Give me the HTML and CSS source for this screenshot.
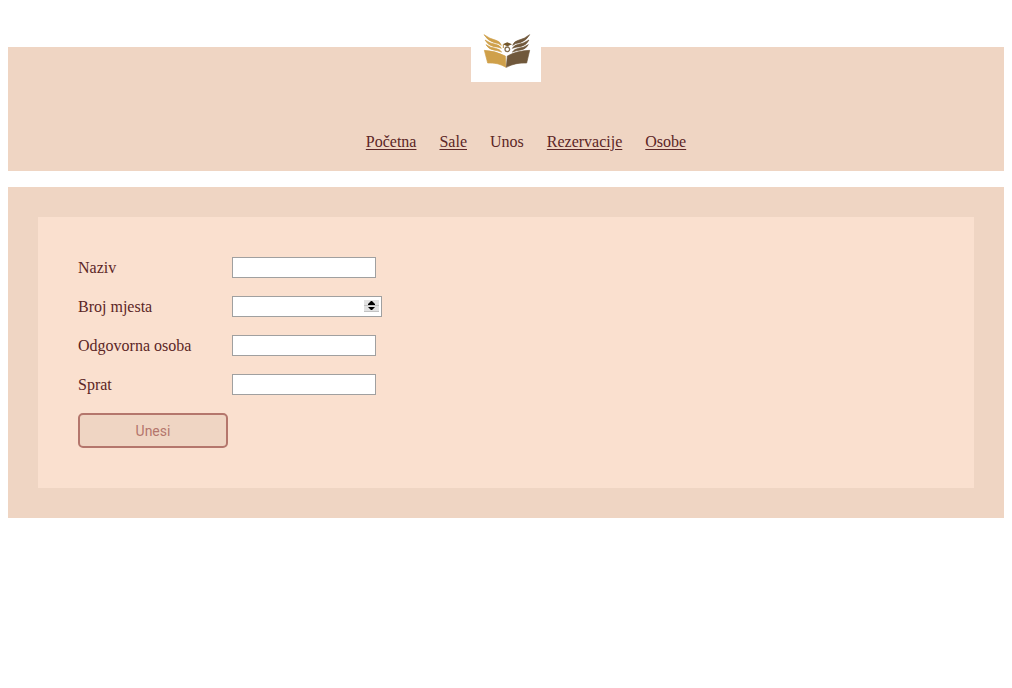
FILE: index.html
```html
<!DOCTYPE html>
<html lang="bs">
<head>
<meta charset="utf-8">
<title>Unos</title>
<link rel="stylesheet" href="styles.css">
</head>
<body>
<header class="header">
  <svg class="logo" viewBox="15 -24 210 210" role="img" aria-label="Logo">
    <rect x="15" y="-24" width="210" height="210" fill="#fff"/>
    <g fill="#cfa04a" stroke="#cfa04a" stroke-width="2" stroke-linejoin="round">
      <path d="M55 91 Q86 92 118 108 L120 142 Q96 127 65 129 Z"/>
      <path d="M54 44 Q72 57 90 61 Q102 64 106 76 Q97 69 85 68 Q65 62 54 44Z"/>
      <path d="M57 60 Q72 70 88 73 Q101 75 106 85 Q96 80 84 80 Q65 76 57 60Z"/>
      <path d="M60 74 Q73 83 88 85 Q101 87 107 96 Q95 92 83 90 Q67 87 60 74Z"/>
    </g>
    <g fill="#70583b" stroke="#70583b" stroke-width="2" stroke-linejoin="round">
      <path d="M191 91 Q154 92 124 108 L121 142 Q148 127 182 129 Z"/>
      <path d="M191 44 Q175 57 157 61 Q144 64 140 76 Q148 69 162 68 Q181 62 191 44Z"/>
      <path d="M189 60 Q174 70 158 73 Q145 75 139 85 Q149 80 163 80 Q182 76 189 60Z"/>
      <path d="M187 74 Q174 83 158 85 Q145 87 139 96 Q150 92 164 90 Q180 87 187 74Z"/>
    </g>
    <path d="M110 73 L124 67 L138 73 L124 79Z" fill="#73562a"/>
    <path d="M112 74 V84" stroke="#b98d43" stroke-width="3"/>
    <circle cx="124" cy="88" r="7" fill="none" stroke="#857052" stroke-width="4"/>
  </svg>
  <nav>
    <ul class="menu">
      <li><a href="#pocetna">Početna</a></li>
      <li><a href="#sale">Sale</a></li>
      <li>Unos</li>
      <li><a href="#rezervacije">Rezervacije</a></li>
      <li><a href="#osobe">Osobe</a></li>
    </ul>
  </nav>
</header>
<main class="content">
  <form class="form">
    <div class="row"><label for="naziv">Naziv</label><input class="field" id="naziv" type="text"></div>
    <div class="row"><label for="broj">Broj mjesta</label>
      <span class="number">
        <input class="field field-number" id="broj" type="number">
        <svg class="spinner" viewBox="0 0 15 12" aria-hidden="true">
          <path fill="#e2e2e2" d="M0 0h15v12H0z"/>
          <path fill="#c2c2c2" d="M0 5h15v1H0zM0 11h15v1H0z"/>
          <path fill="#000" d="M7 1h1l3 3v1H4V4zM4 7h7l-3 3H7z"/>
        </svg>
      </span>
    </div>
    <div class="row"><label for="osoba">Odgovorna osoba</label><input class="field" id="osoba" type="text"></div>
    <div class="row"><label for="sprat">Sprat</label><input class="field" id="sprat" type="text"></div>
    <button class="submit" type="button">Unesi</button>
  </form>
</main>
</body>
</html>
```

FILE: styles.css
```css
body {
  margin: 8px;
  padding-top: 39px;
  background: #fff;
  color: #5c2626;
  font: 16px/18px "Liberation Serif", "Times New Roman", serif;
}

.header {
  display: flex;
  flex-direction: column;
  align-items: center;
  padding-bottom: 20px;
  background: #efd5c3;
}

.logo {
  width: 70px;
  height: 70px;
  margin: -35px 0 51px;
}

.menu {
  display: flex;
  justify-content: center;
  gap: 23px;
  margin: 0;
  padding: 0 0 0 40px;
  list-style: none;
}

.menu a {
  color: inherit;
  text-underline-offset: 2px;
}

.content {
  margin-top: 16px;
  padding: 30px;
  background: #efd5c3;
}

.form {
  display: flex;
  flex-direction: column;
  align-items: flex-start;
  gap: 18px;
  padding: 40px;
  background: #fae0cf;
}

.row {
  display: grid;
  grid-template-columns: 154px auto;
  align-items: center;
}

.field {
  display: block;
  box-sizing: border-box;
  width: 144px;
  height: 21px;
  padding: 1px 2px;
  border: 1px solid #a0a0a0;
  border-radius: 0;
  background: #fff;
  font: 13px "Liberation Sans", Arial, sans-serif;
}

.number {
  position: relative;
}

.field-number {
  width: 150px;
  appearance: textfield;
}

.spinner {
  position: absolute;
  top: 4px;
  right: 3px;
  width: 15px;
  height: 12px;
}

.submit {
  width: 150px;
  height: 35px;
  padding: 0;
  border: 2px solid #b4766c;
  border-radius: 5px;
  background: #efd5c3;
  color: #b4766c;
  font: 14px Roboto, sans-serif;
}
```
